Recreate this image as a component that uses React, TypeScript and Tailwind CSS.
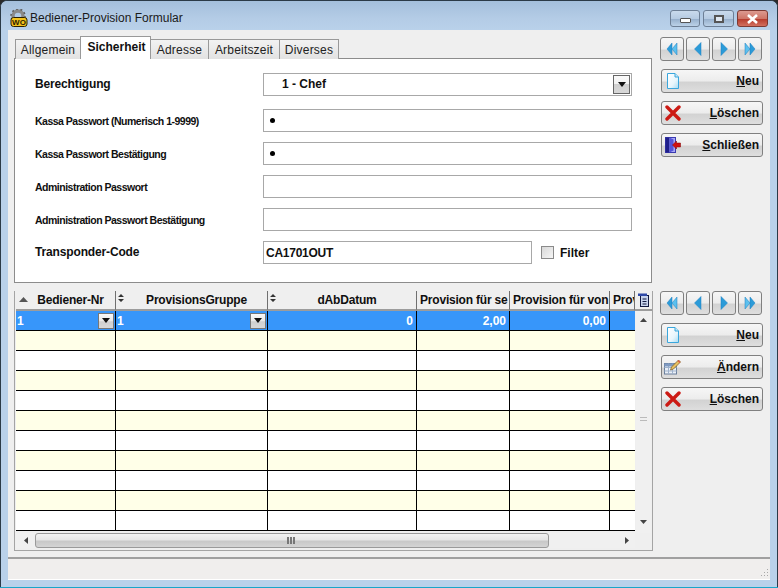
import React from "react";

const font = { fontFamily: '"Liberation Sans", Arial, sans-serif' };

function NavIcon({ kind }: { kind: "first" | "prev" | "next" | "last" }) {
  const c = "#2b9bd8";
  return (
    <svg width="14" height="14" viewBox="0 0 14 14">
      {kind === "first" && (
        <>
          <path d="M7 1 L2 7 L7 13 Z" fill={c} stroke="#1b7fc0" strokeWidth="0.5" />
          <path d="M12 1 L7 7 L12 13 Z" fill="#5cc0ee" stroke="#1b7fc0" strokeWidth="0.5" />
        </>
      )}
      {kind === "prev" && <path d="M10 0.5 L3.5 7 L10 13.5 Z" fill={c} stroke="#1b7fc0" strokeWidth="0.5" />}
      {kind === "next" && <path d="M4 0.5 L10.5 7 L4 13.5 Z" fill={c} stroke="#1b7fc0" strokeWidth="0.5" />}
      {kind === "last" && (
        <>
          <path d="M2 1 L7 7 L2 13 Z" fill="#5cc0ee" stroke="#1b7fc0" strokeWidth="0.5" />
          <path d="M7 1 L12 7 L7 13 Z" fill={c} stroke="#1b7fc0" strokeWidth="0.5" />
        </>
      )}
    </svg>
  );
}

function NavRow() {
  const kinds = ["first", "prev", "next", "last"] as const;
  return (
    <div className="flex gap-[2px]">
      {kinds.map((k) => (
        <div
          key={k}
          className="flex h-[24px] w-[24px] items-center justify-center rounded-[3px] border border-[#808080] bg-[linear-gradient(#f6f6f6_0%,#ececec_50%,#d2d2d2_55%,#dedede_100%)]"
        >
          <NavIcon kind={k} />
        </div>
      ))}
    </div>
  );
}

function DocIcon() {
  return (
    <svg width="14" height="16" viewBox="0 0 14 16">
      <defs>
        <linearGradient id="dg" x1="0" y1="0" x2="1" y2="1">
          <stop offset="0" stopColor="#ffffff" />
          <stop offset="0.6" stopColor="#e8f6fc" />
          <stop offset="1" stopColor="#a5dcf5" />
        </linearGradient>
      </defs>
      <path d="M1.5 0.5 H9 L12.5 4 V15.5 H1.5 Z" fill="url(#dg)" stroke="#3aa6dc" strokeWidth="1" />
      <path d="M9 0.5 V4 H12.5" fill="#c6e9f8" stroke="#3aa6dc" strokeWidth="1" />
    </svg>
  );
}

function XIcon() {
  return (
    <svg width="16" height="16" viewBox="0 0 16 16">
      <path d="M2 2 L14 14 M14 2 L2 14" stroke="#cc1a14" strokeWidth="3.4" strokeLinecap="round" />
    </svg>
  );
}

function DoorIcon() {
  return (
    <svg width="16" height="16" viewBox="0 0 16 16">
      <rect x="0.5" y="0.5" width="10" height="15" fill="#a8a8f5" stroke="#3a3ab0" />
      <rect x="0.5" y="0.5" width="4" height="15" fill="#20208a" />
      <path d="M4.5 0.5 L8.5 2.5 V13.5 L4.5 15.5 Z" fill="#5454d8" />
      <path d="M15.5 6 H11.5 V4 L7.5 8 L11.5 12 V10 H15.5 Z" fill="#d01010" stroke="#800000" strokeWidth="0.5" />
    </svg>
  );
}

function EditIcon() {
  return (
    <svg width="18" height="16" viewBox="0 0 18 16">
      <rect x="0.5" y="4.5" width="12" height="10.5" fill="#eaf0f8" stroke="#6a7f9c" />
      <path d="M0.5 8.5 H12.5 M0.5 12 H12.5 M4.5 4.5 V15 M8.5 4.5 V15" stroke="#9fb2cc" strokeWidth="1" />
      <rect x="0.5" y="4.5" width="12" height="3" fill="#7f9ac2" />
      <path d="M6.5 11 L7.5 8 L14.5 1 L16.5 3 L9.5 10 Z" fill="#e8c060" stroke="#7a5a20" strokeWidth="0.7" />
      <path d="M14.5 1 L16.5 3 L15.5 4 L13.5 2 Z" fill="#d85a4a" />
    </svg>
  );
}

function BigButton({ icon, hot, rest }: { icon: React.ReactNode; hot: string; rest: string }) {
  return (
    <div className="flex h-[24px] w-[102px] items-center justify-between rounded-[3px] border border-[#808080] bg-[linear-gradient(#f6f6f6_0%,#ececec_50%,#d2d2d2_55%,#dedede_100%)] pl-[2px] pr-[3px]">
      <span className="flex w-[18px] items-center justify-center">{icon}</span>
      <span className="text-[12px] font-bold text-[#101010]">
        <span className="underline">{hot}</span>
        {rest}
      </span>
    </div>
  );
}

function Dot() {
  return <span className="ml-[2px] block h-[5px] w-[5px] rounded-full bg-black" />;
}

function FormRow({ label, big, children }: { label: string; big?: boolean; children: React.ReactNode }) {
  return (
    <div className="flex h-[23px] items-center">
      <div
        className={`w-[228px] font-bold text-[#101010] ${
          big ? "mt-[-1px] text-[12px] tracking-[-0.15px]" : "mt-[3px] text-[10.5px] tracking-[-0.5px]"
        }`}
      >
        {label}
      </div>
      {children}
    </div>
  );
}

const cols = "grid grid-cols-[100px_152px_149px_93px_100px_25px]";

function HeaderCell({ text, sort, up, left }: { text: string; sort?: boolean; up?: boolean; left?: boolean }) {
  return (
    <div
      className={`relative flex h-[20px] items-center overflow-hidden whitespace-nowrap border-r border-b-2 border-r-[#707070] border-b-[#9c9c9c] bg-[#efefef] text-[12px] font-bold tracking-[-0.2px] text-[#101010] ${
        left ? "justify-start pl-[3px]" : "justify-center pl-[10px]"
      }`}
    >
      {up && (
        <svg className="absolute left-[3px] top-[6px]" width="9" height="5" viewBox="0 0 9 5">
          <path d="M4.5 0 L9 5 H0 Z" fill="#555" />
        </svg>
      )}
      {sort && (
        <svg className="absolute left-[2px] top-[3px]" width="6" height="8" viewBox="0 0 6 8">
          <path d="M3 0 L6 3 H0 Z M3 8 L6 5 H0 Z" fill="#333" />
        </svg>
      )}
      {text}
    </div>
  );
}

function ComboCell() {
  return (
    <div className="flex h-[19px] items-center justify-between border-r border-r-black bg-[#3796fa] pl-[1px] pr-[1px] text-[12px] font-bold text-white">
      <span>1</span>
      <span className="flex h-[16px] w-[16px] items-center justify-center border border-[#777] bg-[linear-gradient(#fafafa_0%,#e8e8e8_50%,#cfcfcf_55%,#d8d8d8_100%)]">
        <svg width="8" height="5" viewBox="0 0 8 5">
          <path d="M0 0 H8 L4 5 Z" fill="#111" />
        </svg>
      </span>
    </div>
  );
}

function BlueCell({ v, last }: { v?: string; last?: boolean }) {
  return (
    <div
      className={`flex h-[19px] items-center justify-end bg-[#3796fa] pr-[3px] text-[12px] font-bold text-white ${
        last ? "" : "border-r border-r-black"
      }`}
    >
      {v}
    </div>
  );
}

function EmptyRow({ yellow }: { yellow: boolean }) {
  const bg = yellow ? "bg-[#ffffe8]" : "bg-white";
  return (
    <div className={`${cols} h-[20px] border-t border-t-black ${bg}`}>
      {[0, 1, 2, 3, 4].map((i) => (
        <div key={i} className="border-r border-r-black" />
      ))}
      <div />
    </div>
  );
}

const tabOff =
  "mb-[-1px] flex h-[20px] items-center justify-center bg-[linear-gradient(#f2f2f2,#e2e2e2)] text-[12px] tracking-[0.2px] text-[#222] border-t border-r border-[#999]";

export default function App() {
  return (
    <div className="h-[588px] w-[778px] overflow-hidden bg-[#2a2a2a]" style={font}>
      <div className="flex h-[587px] w-[778px] flex-col overflow-hidden rounded-t-[7px] border-x border-t border-b-0 border-[#2b3a47] bg-[#b9d1ea]">
        {/* Title bar */}
        <div className="flex h-[29px] shrink-0 items-start bg-[linear-gradient(#a4bfdc_0%,#b4cce6_60%,#b9d1ea_100%)] pl-[8px] pr-[9px]">
          <div className="mt-[8px] flex h-[18px] w-[20px] items-center justify-center">
            <svg width="18" height="18" viewBox="0 0 18 18">
              <circle cx="8" cy="7" r="5" fill="none" stroke="#8a8a8a" strokeWidth="3.4" />
              <circle cx="8" cy="7" r="7" fill="none" stroke="#5f5f5f" strokeWidth="1.6" strokeDasharray="2 2.4" />
              <rect x="1" y="8.5" width="16" height="9" rx="2.5" fill="#f3c21c" stroke="#2a2000" />
              <text x="9" y="16" textAnchor="middle" fontSize="8" fontWeight="700" fill="#2a1c00" fontFamily="Liberation Sans, sans-serif">
                WO
              </text>
            </svg>
          </div>
          <div className="ml-[1px] mt-[10px] text-[12px] leading-[14px] text-[#1a1a1a]">Bediener-Provision Formular</div>
          <div className="ml-auto mt-[9px] flex gap-[3px]">
            <div className="flex h-[17px] w-[30px] items-center justify-center rounded-[3px] border border-[#6d7f95] bg-[linear-gradient(#c9daec_0%,#b6cbe2_50%,#97b0cc_55%,#bcd2e8_100%)]">
              <span className="mt-[3px] block h-[5px] w-[11px] rounded-[1px] border border-[#555] bg-white" />
            </div>
            <div className="flex h-[17px] w-[31px] items-center justify-center rounded-[3px] border border-[#6d7f95] bg-[linear-gradient(#c9daec_0%,#b6cbe2_50%,#97b0cc_55%,#bcd2e8_100%)]">
              <span className="block h-[8px] w-[10px] border-2 border-[#555] bg-[#dfe8f2]" />
            </div>
            <div className="flex h-[17px] w-[31px] items-center justify-center rounded-[3px] border border-[#7d3a33] bg-[linear-gradient(#dc9a90_0%,#cf7668_50%,#b73d2e_55%,#d2705f_100%)]">
              <svg width="13" height="10" viewBox="0 0 13 10">
                <path d="M2 1 L11 9 M11 1 L2 9" stroke="#fff" strokeWidth="2.6" />
              </svg>
            </div>
          </div>
        </div>

        {/* Client */}
        <div className="mx-[7px] flex h-[550px] flex-col bg-[#efefef]">
          <div className="flex flex-1 gap-[8px] pl-[6px] pt-[6px]">
            {/* Left */}
            <div className="flex w-[639px] flex-col">
              {/* Tabs */}
              <div className="z-10 flex h-[22px] items-end pl-[1px]">
                <div className="mb-[-1px] flex h-[20px] w-[65px] items-center justify-center border border-b-0 border-r-0 border-[#999] bg-[linear-gradient(#f2f2f2,#e2e2e2)] text-[12px] tracking-[0.2px] text-[#222]">
                  Allgemein
                </div>
                <div className="mb-[-1px] flex h-[23px] w-[71px] items-center justify-center border border-b-0 border-[#999] bg-white pl-[2px] pb-[2px] text-[12px] font-bold text-[#101010]">
                  Sicherheit
                </div>
                <div className={`${tabOff} w-[58px]`}>Adresse</div>
                <div className={`${tabOff} w-[71px]`}>Arbeitszeit</div>
                <div className={`${tabOff} w-[59px]`}>Diverses</div>
              </div>
              {/* Panel */}
              <div className="flex h-[225px] w-[638px] flex-col gap-[10px] border border-[#8c8c8c] bg-white pl-[20px] pt-[14px]">
                <FormRow label="Berechtigung" big>
                  <div className="flex h-[23px] w-[369px] items-center justify-between border border-[#a8a8a8] bg-white pl-[18px] pr-[1px] text-[12px] font-bold text-[#101010]">
                    <span className="mt-[-2px]">1 - Chef</span>
                    <span className="flex h-[19px] w-[17px] items-center justify-center border border-[#666] bg-[linear-gradient(#fafafa_0%,#f2f2f2_45%,#d0d0d0_50%,#d8d8d8_100%)]">
                      <svg width="8" height="5" viewBox="0 0 8 5">
                        <path d="M0 0 H8 L4 5 Z" fill="#111" />
                      </svg>
                    </span>
                  </div>
                </FormRow>
                <div className="mt-[3px] flex flex-col gap-[10px]">
                  <FormRow label="Kassa Passwort (Numerisch 1-9999)">
                    <div className="flex h-[23px] w-[369px] items-center border border-[#a8a8a8] pl-[4px]">
                      <Dot />
                    </div>
                  </FormRow>
                  <FormRow label="Kassa Passwort Bestätigung">
                    <div className="flex h-[23px] w-[369px] items-center border border-[#a8a8a8] pl-[4px]">
                      <Dot />
                    </div>
                  </FormRow>
                  <FormRow label="Administration Passwort">
                    <div className="h-[23px] w-[369px] border border-[#a8a8a8] bg-white" />
                  </FormRow>
                  <FormRow label="Administration Passwort Bestätigung">
                    <div className="h-[23px] w-[369px] border border-[#a8a8a8] bg-white" />
                  </FormRow>
                  <FormRow label="Transponder-Code" big>
                    <div className="flex h-[23px] w-[269px] items-center border border-[#a8a8a8] bg-white pl-[2px] text-[12px] font-bold tracking-[-0.25px] text-[#101010]">
                      CA1701OUT
                    </div>
                    <div className="ml-[9px] h-[13px] w-[13px] border border-[#8a8a8a] bg-[linear-gradient(135deg,#d8d8d8,#f6f6f6)]" />
                    <span className="ml-[6px] text-[12px] font-bold text-[#101010]">Filter</span>
                  </FormRow>
                </div>
              </div>

              {/* Grid */}
              <div className="mt-[8px] flex h-[260px] w-[639px] flex-col border-x border-b border-t-0 border-[#a4a4a4] bg-[#efefef] pl-[1px]">
                <div className="flex h-[242px]">
                  <div className="h-[240px] w-[619px] overflow-hidden">
                    <div className={cols}>
                      <HeaderCell text="Bediener-Nr" up />
                      <HeaderCell text="ProvisionsGruppe" sort />
                      <HeaderCell text="dAbDatum" sort />
                      <HeaderCell text="Provision für se" left />
                      <HeaderCell text="Provision für von" left />
                      <HeaderCell text="Prov" left />
                    </div>
                    <div className={cols}>
                      <ComboCell />
                      <ComboCell />
                      <BlueCell v="0" />
                      <BlueCell v="2,00" />
                      <BlueCell v="0,00" />
                      <BlueCell last />
                    </div>
                    {[true, false, true, false, true, false, true, false, true, false, true].map((y, i) => (
                      <EmptyRow key={i} yellow={y} />
                    ))}
                  </div>
                  <div className="flex w-[17px] flex-col items-center">
                    <div className="flex h-[20px] w-[17px] items-center justify-center border-b-2 border-b-[#9c9c9c]">
                      <svg width="13" height="14" viewBox="0 0 13 14">
                        <rect x="3.5" y="2.5" width="8" height="11" fill="#c8d4ee" stroke="#10183f" />
                        <rect x="1" y="0.5" width="9" height="2.5" fill="#2f49a8" />
                        <path d="M5.5 6 H9.5 M5.5 8.5 H9.5 M5.5 11 H9.5" stroke="#10183f" />
                      </svg>
                    </div>
                    <div className="flex h-[222px] w-[15px] flex-col items-center justify-between bg-[#f0f0f0] pt-[7px] pb-[9px]">
                      <svg width="7" height="4" viewBox="0 0 7 4">
                        <path d="M3.5 0 L7 4 H0 Z" fill="#444" />
                      </svg>
                      <span className="mb-[4px] block h-[4px] w-[7px] border-y border-[#bbb]" />
                      <svg width="7" height="4" viewBox="0 0 7 4">
                        <path d="M0 0 H7 L3.5 4 Z" fill="#444" />
                      </svg>
                    </div>
                  </div>
                </div>
                <div className="flex h-[15px] w-[619px] items-center bg-[#f0f0f0]">
                  <div className="flex w-[19px] justify-center">
                    <svg width="4" height="7" viewBox="0 0 4 7">
                      <path d="M4 0 V7 L0 3.5 Z" fill="#444" />
                    </svg>
                  </div>
                  <div className="flex h-[15px] w-[514px] items-center justify-center gap-[1px] rounded-[3px] border border-[#9a9a9a] bg-[linear-gradient(#f2f2f2_0%,#e6e6e6_45%,#c8c8c8_55%,#d4d4d4_100%)] pr-[2px]">
                    <span className="block h-[7px] w-[2px] bg-[#777]" />
                    <span className="block h-[7px] w-[2px] bg-[#777]" />
                    <span className="block h-[7px] w-[2px] bg-[#777]" />
                  </div>
                  <div className="ml-auto mr-[6px]">
                    <svg width="4" height="7" viewBox="0 0 4 7">
                      <path d="M0 0 V7 L4 3.5 Z" fill="#444" />
                    </svg>
                  </div>
                </div>
              </div>
            </div>

            {/* Right */}
            <div className="ml-[-1px] flex w-[103px] flex-col">
              <div className="mt-[1px]">
                <NavRow />
              </div>
              <div className="ml-[1px] mt-[8px] flex flex-col gap-[8px]">
                <BigButton icon={<DocIcon />} hot="N" rest="eu" />
                <BigButton icon={<XIcon />} hot="L" rest="öschen" />
                <BigButton icon={<DoorIcon />} hot="S" rest="chließen" />
              </div>
              <div className="mt-[134px]">
                <NavRow />
              </div>
              <div className="ml-[1px] mt-[8px] flex flex-col gap-[8px]">
                <BigButton icon={<DocIcon />} hot="N" rest="eu" />
                <BigButton icon={<EditIcon />} hot="Ä" rest="ndern" />
                <BigButton icon={<XIcon />} hot="L" rest="öschen" />
              </div>
            </div>
          </div>

          {/* Status bar */}
          <div className="relative h-[23px] shrink-0 border-t-2 border-b border-t-[#a0a0a0] border-b-white bg-[#f0eeed]">
            <svg className="absolute bottom-[1px] right-[1px]" width="10" height="10" viewBox="0 0 10 10">
              <path d="M8 1h1v1H8zM5 4h1v1H5zM8 4h1v1H8zM2 7h1v1H2zM5 7h1v1H5zM8 7h1v1H8z" fill="#a8a8a8" />
            </svg>
          </div>
        </div>
      </div>
      <div className="h-[1px] w-full bg-[#1aa5c8]" />
    </div>
  );
}
